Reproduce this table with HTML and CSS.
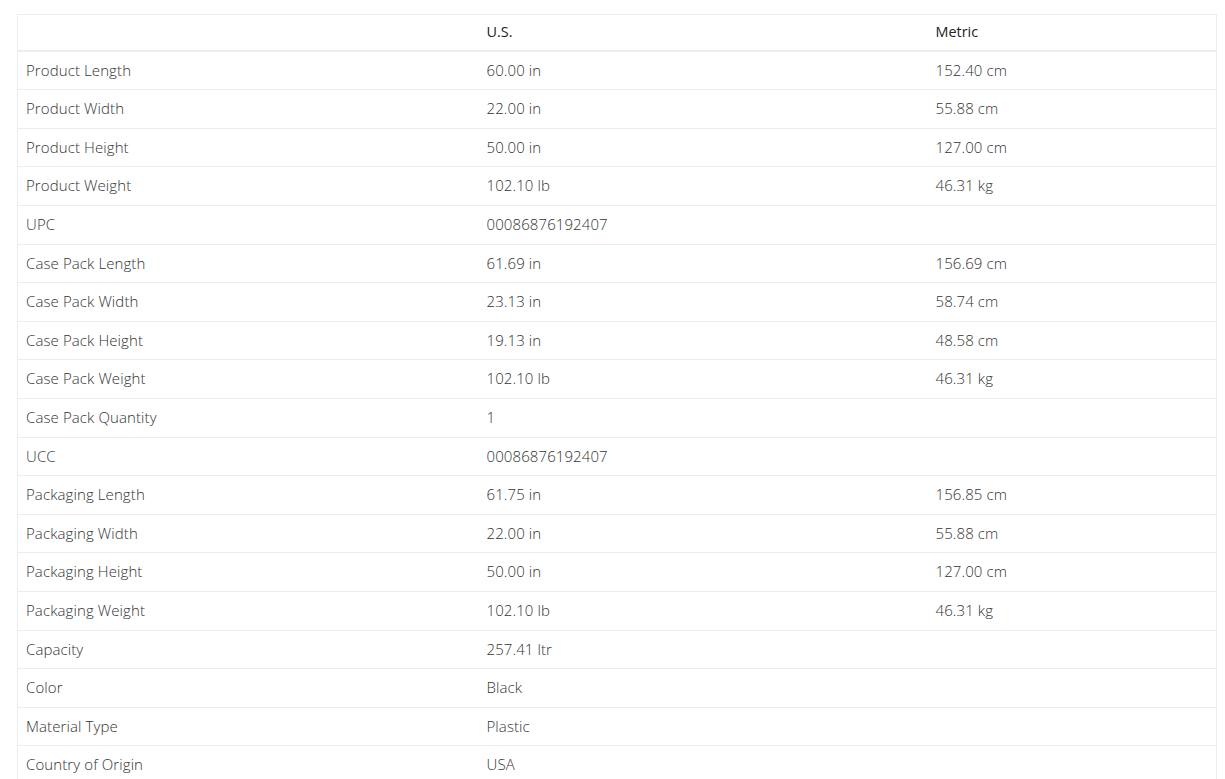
FILE: index.html
```html
<!DOCTYPE html>
<html lang="en">
<head>
<meta charset="utf-8">
<title>Specifications</title>
<link rel="stylesheet" href="styles.css">
</head>
<body>
<div class="spec-wrap">
<table class="spec-table">
<colgroup><col class="c-name"><col class="c-us"><col class="c-metric"></colgroup>
<thead>
<tr><th></th><th>U.S.</th><th>Metric</th></tr>
</thead>
<tbody>
<tr><td>Product Length</td><td>60.00 in</td><td>152.40 cm</td></tr>
<tr><td>Product Width</td><td>22.00 in</td><td>55.88 cm</td></tr>
<tr><td>Product Height</td><td>50.00 in</td><td>127.00 cm</td></tr>
<tr><td>Product Weight</td><td>102.10 lb</td><td>46.31 kg</td></tr>
<tr><td>UPC</td><td>00086876192407</td><td></td></tr>
<tr><td>Case Pack Length</td><td>61.69 in</td><td>156.69 cm</td></tr>
<tr><td>Case Pack Width</td><td>23.13 in</td><td>58.74 cm</td></tr>
<tr><td>Case Pack Height</td><td>19.13 in</td><td>48.58 cm</td></tr>
<tr><td>Case Pack Weight</td><td>102.10 lb</td><td>46.31 kg</td></tr>
<tr><td>Case Pack Quantity</td><td>1</td><td></td></tr>
<tr><td>UCC</td><td>00086876192407</td><td></td></tr>
<tr><td>Packaging Length</td><td>61.75 in</td><td>156.85 cm</td></tr>
<tr><td>Packaging Width</td><td>22.00 in</td><td>55.88 cm</td></tr>
<tr><td>Packaging Height</td><td>50.00 in</td><td>127.00 cm</td></tr>
<tr><td>Packaging Weight</td><td>102.10 lb</td><td>46.31 kg</td></tr>
<tr><td>Capacity</td><td>257.41 ltr</td><td></td></tr>
<tr><td>Color</td><td>Black</td><td></td></tr>
<tr><td>Material Type</td><td>Plastic</td><td></td></tr>
<tr><td>Country of Origin</td><td>USA</td><td></td></tr>
</tbody>
</table>
</div>
</body>
</html>
```
FILE: styles.css
```css
html, body {
  margin: 0;
  padding: 0;
  background: #fff;
}
body {
  font-family: "Open Sans", "Noto Sans", sans-serif;
  font-size: 14.4px;
  line-height: 21.6px;
  color: #444;
}
.spec-wrap {
  padding: 14px 8px 0 17px;
}
.spec-table {
  width: 1199px;
  border-collapse: collapse;
  table-layout: fixed;
  border: 1px solid #ececec;
}
.c-name { width: 461px; }
.c-us { width: 449px; }
.c-metric { width: 289px; }
.spec-table th,
.spec-table td {
  padding: 8px 8px;
  text-align: left;
  vertical-align: top;
  border-top: 1px solid #ececec;
  line-height: 21.6px;
}
.spec-table th {
  color: #222;
  font-weight: 400;
  padding-top: 6px;
  padding-bottom: 7px;
  border-bottom: 2px solid #ececec;
}
.spec-table td {
  color: #333;
  font-weight: 300;
  font-size: 15px;
  letter-spacing: 0.1px;
}
```
